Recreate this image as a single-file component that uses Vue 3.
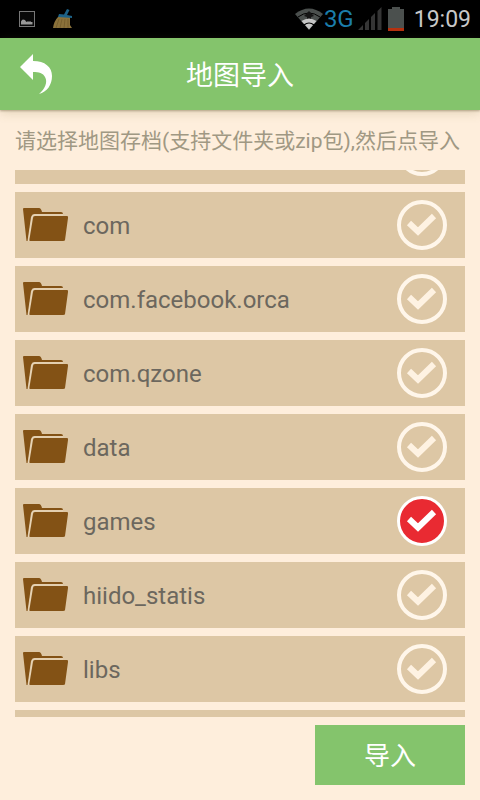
<script setup>
import { onMounted, ref } from 'vue'

const HIDDEN_PART = 52

const list = ref(null)
const folders = ref([
  { id: 0, name: '', selected: false },
  { id: 1, name: 'com', selected: false },
  { id: 2, name: 'com.facebook.orca', selected: false },
  { id: 3, name: 'com.qzone', selected: false },
  { id: 4, name: 'data', selected: false },
  { id: 5, name: 'games', selected: true },
  { id: 6, name: 'hiido_statis', selected: false },
  { id: 7, name: 'libs', selected: false },
  { id: 8, name: '', selected: false },
])

// Open the list scrolled part of the way through its first row.
onMounted(() => {
  list.value.scrollTop = HIDDEN_PART
})
</script>

<template>
  <div class="screen">
    <div class="status">
      <div class="status-group notices">
        <svg class="picture-icon" viewBox="0 0 16 16" aria-hidden="true">
          <rect x="0.5" y="0.5" width="15" height="15" fill="#080808" stroke="#777" />
          <path d="M2 13.500V10.500L3 9L4 8.500L6 9L7 10.500L8 11L9 10L10 11L11 10L12 11L13.500 11V13.500Z" fill="#999" />
        </svg>
        <svg class="broom-icon" viewBox="0 0 20 20" aria-hidden="true">
          <path d="M5 8H17L17 16L19 19H0Q1 12 5 8Z" fill="#8a713a" />
          <path d="M6 10L3 19M9 10L7 19M12 10L11 19M15 10L15 19" stroke="#6e5829" stroke-width="0.700" fill="none" />
          <path d="M6 5L11 5.500L14 0L16.500 1L14 6L19 7V9L5 8Z" fill="#1d6287" />
        </svg>
      </div>
      <div class="status-group">
        <svg class="wifi-icon" viewBox="0 0 30 22" aria-hidden="true">
          <path d="M1 6Q15 -5 29 6L15 22Z" fill="#4b504e" />
          <path d="M4 9Q15 1 26 9" fill="none" stroke="#000" stroke-width="1" />
          <path d="M15 3L10 8L13 9V12H17V9L20 8Z" fill="#151515" />
          <path d="M7.500 13Q15 8 22.500 13L15 21.500Z" fill="#c6c6c6" />
          <path d="M10 17Q15 13 20 17" fill="none" stroke="#000" stroke-width="1.200" />
        </svg>
        <span class="network">3G</span>
        <svg class="signal-icon" viewBox="0 0 24 24" aria-hidden="true">
          <path d="M0 23L5 18V23ZM7 16L11 12V23H7ZM13 10L17 6V23H13ZM19.500 4L23.500 0V23H19.500Z" fill="#353535" />
        </svg>
        <svg class="battery-icon" viewBox="0 0 16 24" aria-hidden="true">
          <path d="M4 0H12V2H16V24H0V2H4Z" fill="#4b504e" />
          <path d="M0 21H16V24H0Z" fill="#b5310f" />
        </svg>
        <time class="clock">19:09</time>
      </div>
    </div>

    <header class="header">
      <button class="back" type="button" aria-label="返回">
        <svg viewBox="0 0 34 40" aria-hidden="true">
          <path d="M0 13L13 0V7C25 7 32 13 32 22C32 31 27 38 19 40C25 35 28 28 25 23C23 19 19 18 13 18V26Z" fill="#fff" />
        </svg>
      </button>
      <h1 class="title">地图导入</h1>
    </header>

    <main class="content">
      <p class="hint">请选择地图存档(支持文件夹或zip包),然后点导入</p>
      <ul ref="list" class="list">
        <li v-for="folder in folders" :key="folder.id">
          <label class="row">
            <svg class="folder-icon" viewBox="0 0 46 34" aria-hidden="true">
              <path d="M0 1Q0 0 1 0H16Q18 0 19 4H38Q40 4 40 6H11Q9 6 8 9L4.500 33H3.500Z" fill="#835215" />
              <path d="M5.500 33L9 9.500Q9.500 7 12 7H40" fill="none" stroke="#ead7ba" stroke-width="1" />
              <path d="M12 8H44Q45.500 8 45 10L42 32Q42 33 40 33H7Q6 33 6.500 31L10 10Q10 8 12 8Z" fill="#835215" />
            </svg>
            <span class="name">{{ folder.name }}</span>
            <span class="mark">
              <input v-model="folder.selected" class="box" type="checkbox" />
              <svg class="tick" viewBox="0 0 50 50" aria-hidden="true">
                <path d="M12 23L21 31.500L37 16" fill="none" stroke="currentColor" stroke-width="6" />
              </svg>
            </span>
          </label>
        </li>
      </ul>
    </main>

    <footer class="footer">
      <button class="import" type="button">导入</button>
    </footer>
  </div>
</template>

<style>
body {
  background: #feeedc;
}
</style>

<style scoped>
.screen {
  display: flex;
  flex-direction: column;
  height: 100vh;
  background: #feeedc;
  font-family: Roboto, "Noto Sans CJK SC", sans-serif;
}

.status {
  display: flex;
  flex: none;
  align-items: center;
  justify-content: space-between;
  height: 38px;
  padding: 0 9px 0 19px;
  background: #000;
}

.status-group {
  display: flex;
  align-items: center;
}

.notices {
  gap: 18px;
}

.picture-icon {
  width: 16px;
  height: 16px;
}

.broom-icon {
  width: 20px;
  height: 20px;
}

.wifi-icon {
  width: 30px;
  height: 22px;
}

.network {
  color: #1b7daa;
  font-size: 24px;
  line-height: 36px;
}

.signal-icon {
  width: 24px;
  height: 24px;
  margin: 0 6px 0 4px;
}

.battery-icon {
  width: 16px;
  height: 24px;
}

.clock {
  margin-left: 10px;
  padding-top: 2px;
  color: #c8c8c8;
  font-size: 23px;
  line-height: 36px;
}

.header {
  z-index: 1;
  display: grid;
  flex: none;
  grid-template-columns: 60px 1fr 60px;
  align-items: center;
  height: 72px;
  background: #84c46c;
  box-shadow: 0 1px 2px rgba(90, 70, 40, 0.4), 0 3px 10px rgba(120, 110, 50, 0.2);
}

.back {
  height: 72px;
  padding: 0 0 0 20px;
  border: 0;
  background: none;
}

.back svg {
  display: block;
  width: 34px;
  height: 40px;
}

.title {
  margin: 0;
  padding-top: 4px;
  color: #fff;
  font-size: 27px;
  font-weight: 400;
  line-height: 68px;
  text-align: center;
}

.content {
  display: flex;
  flex: 1;
  flex-direction: column;
  min-height: 0;
  padding: 0 15px;
}

.hint {
  flex: none;
  margin: 0;
  padding-top: 2px;
  color: #a09883;
  font-size: 21px;
  line-height: 58px;
  white-space: nowrap;
}

.list {
  display: flex;
  flex: 1;
  flex-direction: column;
  gap: 8px;
  min-height: 0;
  margin: 0;
  padding: 0;
  overflow-y: auto;
  list-style: none;
  scrollbar-width: none;
}

.row {
  display: flex;
  align-items: center;
  height: 66px;
  padding: 0 18px 0 8px;
  background: #ddc7a5;
}

.folder-icon {
  flex: none;
  width: 46px;
  height: 34px;
}

.name {
  flex: 1;
  padding: 2px 0 0 14px;
  color: #6c675e;
  font-size: 24px;
  line-height: 32px;
}

.mark {
  display: grid;
  flex: none;
  width: 50px;
  height: 50px;
}

.box,
.tick {
  grid-area: 1 / 1;
  width: 50px;
  height: 50px;
}

.box {
  margin: 0;
  border: 4px solid #fff6ea;
  border-radius: 50%;
  appearance: none;
}

.box:checked {
  border: 3px solid #fff;
  background: #e92a32;
}

.tick {
  color: #fef2e2;
  pointer-events: none;
}

.box:checked + .tick {
  color: #fff;
}

.footer {
  display: flex;
  flex: none;
  justify-content: flex-end;
  padding: 8px 15px 15px;
}

.import {
  width: 150px;
  height: 60px;
  padding: 2px 0 0;
  border: 0;
  background: #84c46c;
  color: #fff;
  font-family: inherit;
  font-size: 26px;
  line-height: 58px;
}
</style>
